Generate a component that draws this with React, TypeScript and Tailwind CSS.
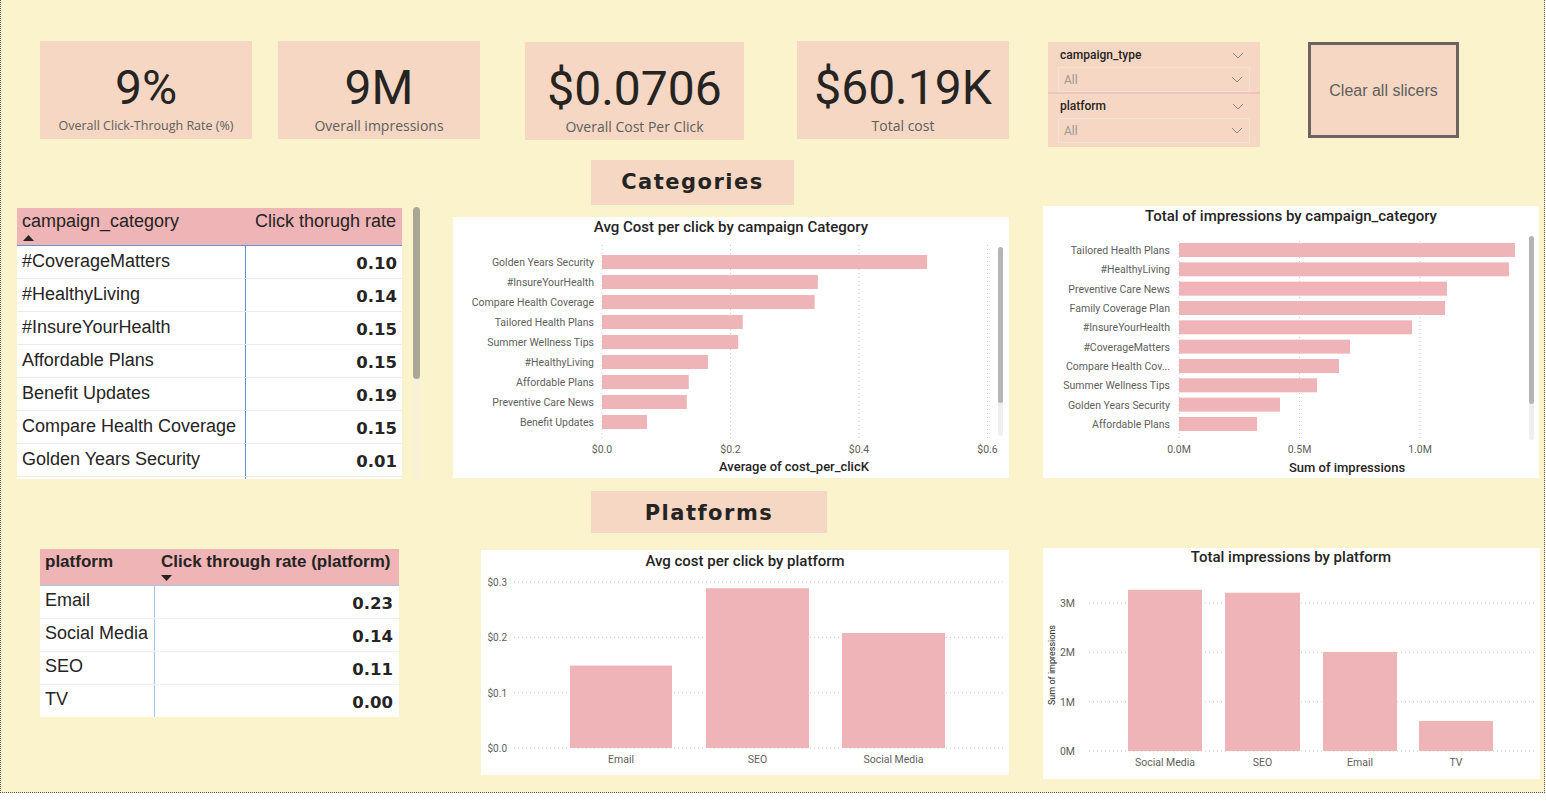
import React from "react";

const PINK = "#eeb4b7";
const GRID = "#c9c9c9";

function Chevron({ className = "" }: { className?: string }) {
  return (
    <svg width="12" height="7" viewBox="0 0 12 7" className={className}>
      <polyline points="1,1 6,6 11,1" fill="none" stroke="#8c8580" strokeWidth="1" />
    </svg>
  );
}

function KpiCard({ value, label, w, labelSize }: { value: string; label: string; w: string; labelSize: string }) {
  return (
    <div className={`${w} h-[98px] bg-[#f5d7c3] flex flex-col items-center pt-[23px]`}>
      <div className="font-['Roboto'] text-[48px] leading-[48px] text-[#252423]">{value}</div>
      <div className={`font-['Open_Sans'] ${labelSize} leading-[16px] mt-[6px] text-[#605e5c] whitespace-nowrap`}>{label}</div>
    </div>
  );
}

function SlicerBlock({ title }: { title: string }) {
  return (
    <div className="px-[10px]">
      <div className="flex items-center justify-between h-[24px] pl-[2px] pr-[6px]">
        <span className="font-['Roboto'] font-medium text-[12px] text-[#252423]">{title}</span>
        <Chevron />
      </div>
      <div className="h-[25px] border border-[#f3e2d8] flex items-center justify-between pl-[5px] pr-[6px]">
        <span className="font-['Roboto'] text-[12px] text-[#9e9894]">All</span>
        <Chevron />
      </div>
    </div>
  );
}

const cat1: [string, number][] = [
  ["Golden Years Security", 0.506],
  ["#InsureYourHealth", 0.336],
  ["Compare Health Coverage", 0.331],
  ["Tailored Health Plans", 0.219],
  ["Summer Wellness Tips", 0.212],
  ["#HealthyLiving", 0.165],
  ["Affordable Plans", 0.135],
  ["Preventive Care News", 0.132],
  ["Benefit Updates", 0.07],
];

const cat2: [string, number][] = [
  ["Tailored Health Plans", 1.394],
  ["#HealthyLiving", 1.369],
  ["Preventive Care News", 1.112],
  ["Family Coverage Plan", 1.104],
  ["#InsureYourHealth", 0.967],
  ["#CoverageMatters", 0.71],
  ["Compare Health Cov...", 0.664],
  ["Summer Wellness Tips", 0.573],
  ["Golden Years Security", 0.419],
  ["Affordable Plans", 0.324],
];

function CostByCategory() {
  const x0 = 149;
  const per = 642.5;
  return (
    <svg width="556" height="261" className="font-['Roboto'] block">
      <text x="278" y="15" textAnchor="middle" fontSize="15" fontWeight="500" fill="#252423">Avg Cost per click by campaign Category</text>
      {[0, 1, 2, 3].map((k) => (
        <line key={k} x1={x0 + 128.5 * k} x2={x0 + 128.5 * k} y1="28" y2="222" stroke={GRID} strokeDasharray="1 3" />
      ))}
      {cat1.map(([n, v], i) => (
        <g key={n}>
          <rect x={x0} y={45 + 20 * i - 7} width={v * per} height="14" fill={PINK} />
          <text x="141" y={45 + 20 * i + 4} textAnchor="end" fontSize="10.5" fill="#605e5c">{n}</text>
        </g>
      ))}
      {["$0.0", "$0.2", "$0.4", "$0.6"].map((t, k) => (
        <text key={t} x={x0 + 128.5 * k} y="236" textAnchor="middle" fontSize="10.5" fill="#605e5c">{t}</text>
      ))}
      <text x="341" y="254" textAnchor="middle" fontSize="13" fontWeight="500" fill="#252423">Average of cost_per_clicK</text>
      <rect x="545" y="30" width="5" height="189" rx="2.5" fill="#efefef" />
      <rect x="545" y="30" width="5" height="156" rx="2.5" fill="#b5b5b5" />
    </svg>
  );
}

function ImpByCategory() {
  const x0 = 136;
  const per = 241;
  const pitch = 19.33;
  return (
    <svg width="496" height="272" className="font-['Roboto'] block">
      <text x="248" y="15" textAnchor="middle" fontSize="15" fontWeight="500" fill="#252423">Total of impressions by campaign_category</text>
      {[0, 1, 2].map((k) => (
        <line key={k} x1={x0 + 120.5 * k} x2={x0 + 120.5 * k} y1="35" y2="232" stroke={GRID} strokeDasharray="1 3" />
      ))}
      {cat2.map(([n, v], i) => (
        <g key={n}>
          <rect x={x0} y={44 + pitch * i - 7} width={v * per} height="14" fill={PINK} />
          <text x="127" y={44 + pitch * i + 4} textAnchor="end" fontSize="10.5" fill="#605e5c">{n}</text>
        </g>
      ))}
      {["0.0M", "0.5M", "1.0M"].map((t, k) => (
        <text key={t} x={x0 + 120.5 * k} y="247" textAnchor="middle" fontSize="10.5" fill="#605e5c">{t}</text>
      ))}
      <text x="304" y="266" textAnchor="middle" fontSize="13" fontWeight="500" fill="#252423">Sum of impressions</text>
      <rect x="486" y="30" width="5" height="204" rx="2.5" fill="#efefef" />
      <rect x="486" y="30" width="5" height="168" rx="2.5" fill="#b5b5b5" />
    </svg>
  );
}

function CostByPlatform() {
  const base = 198;
  const per = 553;
  const bars: [string, number, number, number][] = [
    ["Email", 0.149, 89, 102],
    ["SEO", 0.289, 225, 103],
    ["Social Media", 0.208, 361, 103],
  ];
  return (
    <svg width="528" height="225" className="font-['Roboto'] block">
      <text x="264" y="16" textAnchor="middle" fontSize="15" fontWeight="500" fill="#252423">Avg cost per click by platform</text>
      {[0, 1, 2, 3].map((k) => (
        <g key={k}>
          <line x1="33" x2="522" y1={base - 55.3 * k} y2={base - 55.3 * k} stroke={GRID} strokeDasharray="1 3" />
          <text x="26" y={base - 55.3 * k + 4} textAnchor="end" fontSize="10" fill="#605e5c">{`$0.${k}`}</text>
        </g>
      ))}
      {bars.map(([n, v, x, w]) => (
        <g key={n}>
          <rect x={x} y={base - v * per} width={w} height={v * per} fill={PINK} />
          <text x={x + w / 2} y="213" textAnchor="middle" fontSize="10.5" fill="#605e5c">{n}</text>
        </g>
      ))}
    </svg>
  );
}

function ImpByPlatform() {
  const base = 203;
  const per = 49.3;
  const bars: [string, number, number, number][] = [
    ["Social Media", 3.27, 85, 74],
    ["SEO", 3.21, 182, 75],
    ["Email", 2.01, 280, 74],
    ["TV", 0.61, 376, 74],
  ];
  return (
    <svg width="497" height="231" className="font-['Roboto'] block">
      <text x="248" y="14" textAnchor="middle" fontSize="15" fontWeight="500" fill="#252423">Total impressions by platform</text>
      {[0, 1, 2, 3].map((k) => (
        <g key={k}>
          <line x1="46" x2="492" y1={base - per * k} y2={base - per * k} stroke={GRID} strokeDasharray="1 3" />
          <text x="32" y={base - per * k + 4} textAnchor="end" fontSize="10.5" fill="#605e5c">{`${k}M`}</text>
        </g>
      ))}
      {bars.map(([n, v, x, w]) => (
        <g key={n}>
          <rect x={x} y={base - v * per} width={w} height={v * per} fill={PINK} />
          <text x={x + w / 2} y="218" textAnchor="middle" fontSize="10.5" fill="#605e5c">{n}</text>
        </g>
      ))}
      <text x="12" y="117" transform="rotate(-90 12 117)" textAnchor="middle" fontSize="9" fill="#252423">Sum of impressions</text>
    </svg>
  );
}

function UpArrow() {
  return (
    <svg width="11" height="6" viewBox="0 0 11 6" className="block">
      <polygon points="0,6 5.5,0 11,6" fill="#252423" />
    </svg>
  );
}
function DownArrow() {
  return (
    <svg width="11" height="6" viewBox="0 0 11 6" className="block">
      <polygon points="0,0 5.5,6 11,0" fill="#252423" />
    </svg>
  );
}

const table1: [string, string][] = [
  ["#CoverageMatters", "0.10"],
  ["#HealthyLiving", "0.14"],
  ["#InsureYourHealth", "0.15"],
  ["Affordable Plans", "0.15"],
  ["Benefit Updates", "0.19"],
  ["Compare Health Coverage", "0.15"],
  ["Golden Years Security", "0.01"],
];

const table2: [string, string][] = [
  ["Email", "0.23"],
  ["Social Media", "0.14"],
  ["SEO", "0.11"],
  ["TV", "0.00"],
];

function CategoryTable() {
  return (
    <div className="w-[385px] h-[271px] overflow-hidden bg-white font-['Liberation_Sans'] text-[#252423]">
      <div className="flex h-[38px] bg-[#eeb4b6] border-b border-[#5f95d6]">
        <div className="w-[229px] pl-[5px] pt-[2px] flex flex-col">
          <span className="text-[18px] leading-[22px]">campaign_category</span>
          <span className="ml-[1px] mt-[3px]"><UpArrow /></span>
        </div>
        <div className="flex-1 text-right pr-[6px] pt-[2px] text-[18px] leading-[22px]">Click thorugh rate</div>
      </div>
      {table1.map(([n, v]) => (
        <div key={n} className="flex h-[33px] border-b border-[#ececec]">
          <div className="w-[229px] shrink-0 border-r border-[#5f95d6] pl-[5px] pt-[4px] text-[18px] leading-[22px] whitespace-nowrap">{n}</div>
          <div className="flex-1 text-right pr-[5px] pt-[7px] font-['DejaVu_Sans'] font-bold text-[16.5px] leading-[22px]">{v}</div>
        </div>
      ))}
      <div className="flex h-[33px]">
        <div className="w-[229px] shrink-0 border-r border-[#5f95d6]" />
      </div>
    </div>
  );
}

function PlatformTable() {
  return (
    <div className="w-[359px] h-[168px] overflow-hidden bg-white font-['Liberation_Sans'] text-[#252423]">
      <div className="flex h-[37px] bg-[#eeb4b6] border-b border-[#a7c5e6]">
        <div className="w-[115px] pl-[5px] pt-[3px] font-bold text-[17px] leading-[20px]">platform</div>
        <div className="flex-1 pl-[6px] pt-[3px] flex flex-col">
          <span className="font-bold text-[17px] leading-[20px] whitespace-nowrap">Click through rate (platform)</span>
          <span className="mt-[3px]"><DownArrow /></span>
        </div>
      </div>
      {table2.map(([n, v], i) => (
        <div key={n} className={`flex h-[33px] ${i < 3 ? "border-b border-[#efefef]" : ""}`}>
          <div className="w-[115px] shrink-0 border-r border-[#a7c5e6] pl-[5px] pt-[3px] text-[18px] leading-[22px] whitespace-nowrap">{n}</div>
          <div className="flex-1 text-right pr-[6px] pt-[7px] font-['DejaVu_Sans'] font-bold text-[16.5px] leading-[22px]">{v}</div>
        </div>
      ))}
    </div>
  );
}

function SectionTitle({ text, w, h, pt }: { text: string; w: string; h: string; pt: string }) {
  return (
    <div className={`${w} ${h} ${pt} bg-[#f5d7c3] flex items-center justify-center`}>
      <span className="font-['DejaVu_Sans'] font-bold text-[21px] tracking-[1.5px] text-[#252423]">{text}</span>
    </div>
  );
}

export default function App() {
  return (
    <div className="w-[1546px] h-[805px] bg-white overflow-hidden">
      <div className="w-[1545px] h-[793px] bg-[#fbf3cb] border-l border-r border-b border-dotted border-[#555] flex flex-col">
        {/* KPI row */}
        <div className="h-[160px] pt-[41px] flex items-start shrink-0">
          <KpiCard value="9%" label="Overall Click-Through Rate (%)" w="w-[212px] ml-[39px]" labelSize="text-[12.5px]" />
          <KpiCard value="9M" label="Overall impressions" w="w-[202px] ml-[26px]" labelSize="text-[14px]" />
          <KpiCard value="$0.0706" label="Overall Cost Per Click" w="w-[219px] ml-[45px] mt-[1px]" labelSize="text-[14px]" />
          <KpiCard value="$60.19K" label="Total cost" w="w-[212px] ml-[53px]" labelSize="text-[14px]" />
          <div className="w-[212px] h-[105px] ml-[39px] mt-[1px] bg-[#f5d7c3] flex flex-col">
            <div className="pt-[1px]"><SlicerBlock title="campaign_type" /></div>
            <div className="h-[2px] bg-[#efc4bb]" />
            <SlicerBlock title="platform" />
          </div>
          <div className="w-[151px] h-[96px] ml-[48px] mt-[1px] bg-[#f5d7c3] border-[3px] border-[#6c6460] flex items-center justify-center">
            <span className="font-['Liberation_Sans'] text-[16px] text-[#605e5c] mt-[2px]">Clear all slicers</span>
          </div>
        </div>

        {/* Categories heading */}
        <div className="h-[46px] pl-[590px] shrink-0">
          <SectionTitle text="Categories" w="w-[203px]" h="h-[45px]" pt="pt-[1px]" />
        </div>

        {/* Categories row */}
        <div className="h-[285px] flex items-start shrink-0">
          <div className="ml-[16px] mt-[2px]"><CategoryTable /></div>
          <div className="ml-[11px] mt-[1px] w-[7px] h-[271px] rounded-full bg-[#f8f0d8] flex flex-col">
            <div className="h-[172px] rounded-full bg-[#a9a897]" />
          </div>
          <div className="ml-[33px] mt-[11px] w-[556px] h-[261px] bg-white"><CostByCategory /></div>
          <div className="ml-[34px] w-[496px] h-[272px] bg-white"><ImpByCategory /></div>
        </div>

        {/* Platforms heading */}
        <div className="h-[57px] pl-[590px] shrink-0">
          <SectionTitle text="Platforms" w="w-[236px]" h="h-[42px]" pt="pt-[4px]" />
        </div>

        {/* Platforms row */}
        <div className="flex items-start">
          <div className="ml-[39px] mt-[1px]"><PlatformTable /></div>
          <div className="ml-[82px] mt-[2px] w-[528px] h-[225px] bg-white"><CostByPlatform /></div>
          <div className="ml-[34px] w-[497px] h-[231px] bg-white"><ImpByPlatform /></div>
        </div>
      </div>
    </div>
  );
}
